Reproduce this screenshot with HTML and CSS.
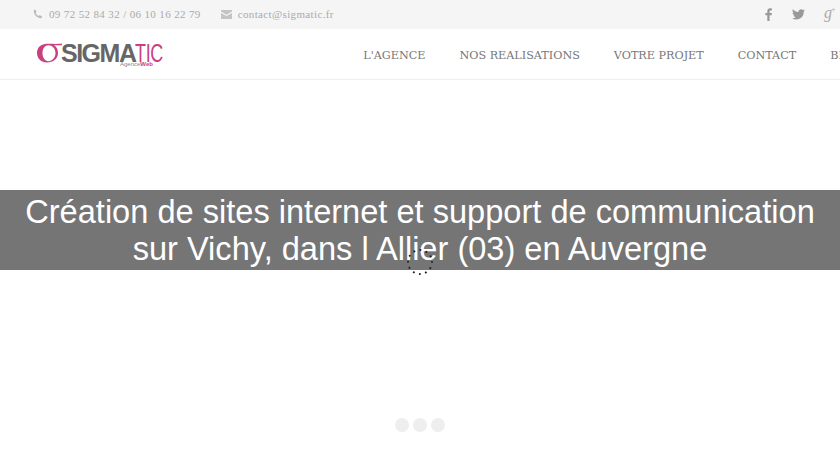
FILE: index.html
```html
<!DOCTYPE html>
<html lang="fr">
<head>
    <meta charset="UTF-8">
    <meta name="viewport" content="width=device-width, initial-scale=1.0">
    <title>Sigmatic - Agence Web</title>
    <link rel="stylesheet" href="styles.css">
</head>
<body>
    <div class="topbar">
        <div class="contact-info">
            <span class="contact-item">
                <svg class="contact-icon" width="10" height="10" viewBox="0 0 10 10"><path d="M2.200.6 3.600 3 2.700 3.900c.5 1.300 1.600 2.400 3 3l.9-.9L9.200 7.600 8.300 9.200C4.300 9.500.6 5.600.7 1.500z" fill="#bbb"/></svg>
                09 72 52 84 32 / 06 10 16 22 79
            </span>
            <span class="contact-item">
                <svg class="contact-icon" width="11" height="9" viewBox="0 0 11 9"><path d="M0 0h11v1.500L5.500 4.800 0 1.500zM0 2.900l5.500 3.200L11 2.900V9H0z" fill="#c4c4c4"/></svg>
                contact@sigmatic.fr
            </span>
        </div>
        <div class="social">
            <svg width="8" height="13" viewBox="0 0 8 13"><path d="M2.300 13V7.200H.4V5h1.900V3.300C2.300 1.300 3.400.3 5.200.3c.8 0 1.400.1 1.700.1v2H5.700c-.9 0-1.100.5-1.100 1.100V5h2.300l-.3 2.200h-2V13z" fill="#999"/></svg>
            <svg width="13" height="11" viewBox="0 0 13 11"><path d="M13 1.300c-.5.200-1 .4-1.500.4.600-.3 1-.8 1.200-1.400-.5.300-1.100.5-1.700.7A2.700 2.700 0 0 0 6.400 3C4.200 2.900 2.200 1.800.9.200.2 1.400.5 3 1.700 3.800c-.4 0-.8-.1-1.200-.3 0 1.300.9 2.400 2.100 2.700-.4.100-.8.100-1.200 0 .3 1.100 1.300 1.800 2.500 1.900C2.900 9 1.500 9.400 0 9.300 4.800 12.300 11.900 9.600 11.700 2.800c.5-.4.900-.9 1.300-1.500z" fill="#999"/></svg>
            <span class="gplus">g<span class="gplus-mark">+</span></span>
        </div>
    </div>

    <header class="header">
        <a class="logo">
            <svg class="logo-mark" width="25" height="20" viewBox="0 0 25 20"><path fill-rule="evenodd" d="M10 .8c4 0 6 .3 15 0v1.400h-8C20 4 21 7 21 10c0 5.500-4.500 9.500-11 9.500C4.200 19.500 0 15.500 0 10 0 4.500 4.200.8 10 .8zM11.500 2.200C7.800 2.200 5.500 5.500 5.500 10c0 4.500 2.300 8.200 6 8.200 3.700 0 7-3.700 7-8.200 0-4.500-3.300-7.800-7-7.800z" fill="#c9407f"/></svg>
            <span class="logo-main">SIGMA</span><span class="logo-end">TIC</span>
            <span class="logo-sub">Agence<b>Web</b></span>
        </a>
        <nav class="menu">
            <a>L'AGENCE</a>
            <a>NOS REALISATIONS</a>
            <a>VOTRE PROJET</a>
            <a>CONTACT</a>
            <a>BLOG</a>
        </nav>
    </header>

    <section class="slider">
        <div class="caption">Création de sites internet et support de communication sur Vichy, dans l Allier (03) en Auvergne</div>
        <svg class="spinner" width="28" height="28" viewBox="0 0 28 28"><circle cx="14" cy="14" r="12" fill="none" stroke="#222" stroke-width="2" stroke-linecap="round" stroke-dasharray="0.100 6.183"/></svg>
        <div class="bullets">
            <span></span>
            <span></span>
            <span></span>
        </div>
    </section>
</body>
</html>
```

FILE: styles.css
```css
html, body {
    margin: 0;
    height: 100%;
    overflow: hidden;
}
body {
    background: #fff;
    font-family: "DejaVu Serif", serif;
    width: 840px;
    height: 460px;
}
.topbar {
    height: 29px;
    background: #f5f5f5;
    display: flex;
    justify-content: space-between;
    align-items: center;
    padding: 0 0 0 33px;
    color: #aaa;
    font-family: "Liberation Serif", serif;
    font-size: 11px;
    letter-spacing: 0.36px;
}
.contact-info {
    display: flex;
    gap: 20px;
    margin-top: -1px;
}
.contact-item {
    display: flex;
    align-items: center;
    gap: 6px;
    white-space: nowrap;
}
.social {
    display: flex;
    align-items: center;
    gap: 19px;
    width: 75px;
}
.gplus {
    color: #aaa;
    font-family: "Liberation Serif", serif;
    font-size: 16px;
    font-style: italic;
    line-height: 1;
    margin-top: -4px;
    letter-spacing: 0;
    display: flex;
}
.gplus-mark {
    font-size: 8px;
    line-height: 10px;
    font-style: normal;
    margin-left: -1px;
}
.header {
    height: 50px;
    border-bottom: 1px solid #eee;
    display: flex;
    align-items: center;
    justify-content: space-between;
    padding-left: 37px;
}
.logo {
    position: relative;
    display: flex;
    align-items: center;
    font-family: "Liberation Sans", sans-serif;
    font-size: 25px;
    line-height: 28px;
    margin-top: -2px;
    white-space: nowrap;
}
.logo-mark {
    margin-right: -1px;
}
.logo-main {
    color: #666;
    font-weight: bold;
    letter-spacing: -1.500px;
}
.logo-end {
    display: inline-block;
    color: #c9407f;
    letter-spacing: -0.5px;
    transform: scaleX(0.72);
    transform-origin: left;
}
.logo-sub {
    position: absolute;
    left: 83px;
    bottom: -1px;
    color: #888;
    font-size: 6px;
    line-height: 7px;
}
.logo-sub b {
    color: #c9407f;
}
.menu {
    display: flex;
    gap: 34px;
    color: #777;
    font-family: "DejaVu Serif", serif;
    font-size: 11.200px;
    white-space: nowrap;
    margin-right: -24px;
    margin-top: 2px;
}
.slider {
    position: relative;
    height: 380px;
}
.caption {
    position: absolute;
    left: 0;
    right: 0;
    top: 110px;
    height: 80px;
    padding: 3px 20px 0;
    box-sizing: border-box;
    background: #757575;
    color: #fff;
    font-family: "Liberation Sans", sans-serif;
    font-size: 32.600px;
    line-height: 37px;
    text-align: center;
}
.spinner {
    position: absolute;
    left: 406px;
    top: 168px;
}
.bullets {
    position: absolute;
    left: 0;
    right: 0;
    top: 338px;
    display: flex;
    justify-content: center;
    gap: 4px;
}
.bullets span {
    width: 14px;
    height: 14px;
    border-radius: 50%;
    background: #eee;
}
```
